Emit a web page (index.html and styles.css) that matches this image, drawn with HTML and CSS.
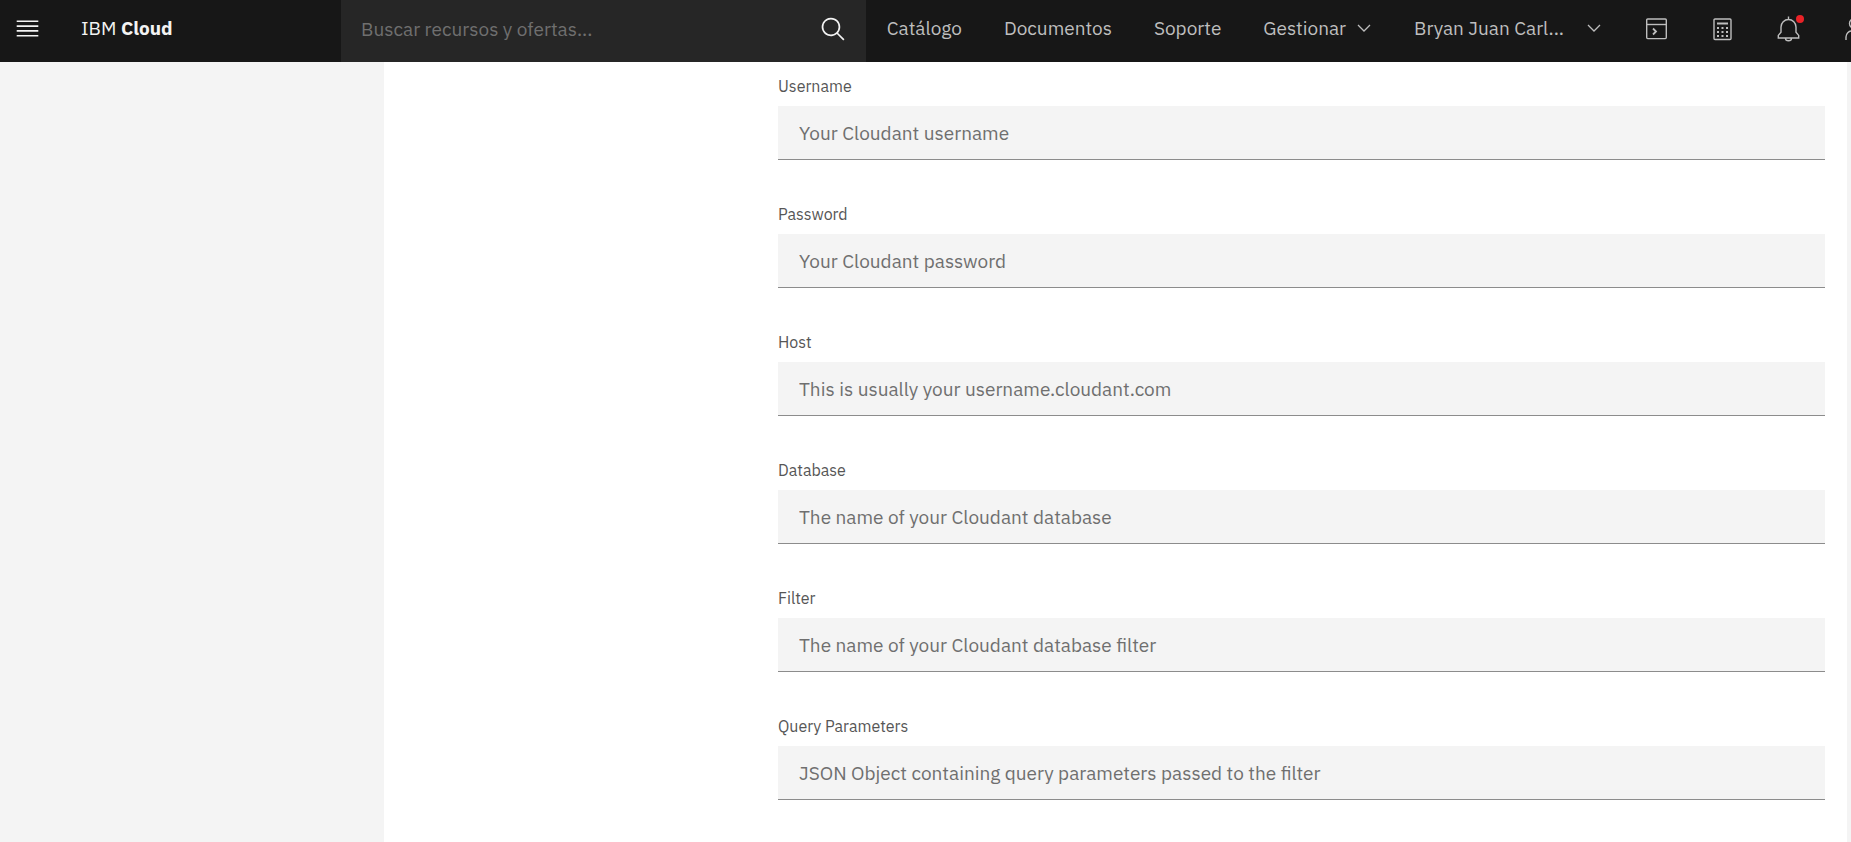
FILE: index.html
```html
<!DOCTYPE html>
<html lang="es">
<head>
<meta charset="utf-8">
<title>IBM Cloud</title>
<link rel="stylesheet" href="styles.css">
</head>
<body>
<header class="header">
  <button class="menu" type="button" aria-label="Menú">
    <svg class="icon" viewBox="0 0 20 20"><path d="M2 14.8h16V16H2zM2 11.2h16v1.2H2zM2 7.6h16v1.2H2zM2 4h16v1.2H2z"/></svg>
  </button>
  <a class="brand" href="#">IBM <b>Cloud</b></a>
  <form class="search" role="search">
    <input class="search-input" type="text" aria-label="Buscar" placeholder="Buscar recursos y ofertas...">
    <button class="search-button" type="button" aria-label="Buscar">
      <svg class="icon" viewBox="0 0 32 32"><path d="M29 27.586l-7.552-7.552a11.018 11.018 0 1 0-1.414 1.414L27.586 29zM4 13a9 9 0 1 1 9 9 9.01 9.01 0 0 1-9-9z"/></svg>
    </button>
  </form>
  <nav class="nav">
    <a class="nav-link" href="#">Catálogo</a>
    <a class="nav-link" href="#">Documentos</a>
    <a class="nav-link" href="#">Soporte</a>
    <button class="nav-link" type="button">Gestionar
      <svg class="chevron" viewBox="0 0 14 9"><path d="M1 1l6 6 6-6"/></svg>
    </button>
  </nav>
  <button class="account" type="button"><span class="account-name">Bryan Juan Carl...</span>
    <svg class="chevron" viewBox="0 0 14 9"><path d="M1 1l6 6 6-6"/></svg>
  </button>
  <div class="tools">
    <button class="tool" type="button" aria-label="Shell">
      <svg class="icon line" viewBox="0 0 27 27"><rect x="3.700" y="4" width="19.600" height="19.600" rx="1"/><path d="M3.700 9.500h19.600"/><path d="M10 13.500l3 3-3 3" stroke-width="1.800"/></svg>
    </button>
    <button class="tool" type="button" aria-label="Calculadora">
      <svg class="icon line" viewBox="0 0 27 27"><rect x="5" y="4" width="17" height="20.500" rx="1"/><path d="M8 8.500h11" stroke-width="2"/><path d="M8 12.900h11M8 16.900h11M8 20.900h11" stroke-width="2" stroke-dasharray="2 2.500"/></svg>
    </button>
    <button class="tool" type="button" aria-label="Notificaciones">
      <svg class="icon line" viewBox="0 0 27 27"><path d="M13.500 1.500v3M3.300 23v-2.600l2.700-3.200v-5.200a7.500 7.500 0 0 1 15 0v5.200l2.700 3.200v2.600zM10.500 23.200a3 2.600 0 0 0 6 0"/></svg>
      <span class="badge"></span>
    </button>
    <button class="tool" type="button" aria-label="Perfil">
      <svg class="icon line" viewBox="0 0 27 27"><circle cx="13.500" cy="8.500" r="5"/><path d="M5 25v-3a6 6 0 0 1 6-6h5a6 6 0 0 1 6 6v3"/></svg>
    </button>
  </div>
</header>
<div class="page">
  <aside class="sidebar"></aside>
  <main class="content">
    <form class="fields">
      <div class="field"><label class="label" for="username">Username</label><input class="input" id="username" type="text" placeholder="Your Cloudant username"></div>
      <div class="field"><label class="label" for="password">Password</label><input class="input" id="password" type="password" placeholder="Your Cloudant password"></div>
      <div class="field"><label class="label" for="host">Host</label><input class="input" id="host" type="text" placeholder="This is usually your username.cloudant.com"></div>
      <div class="field"><label class="label" for="database">Database</label><input class="input" id="database" type="text" placeholder="The name of your Cloudant database"></div>
      <div class="field"><label class="label" for="filter">Filter</label><input class="input" id="filter" type="text" placeholder="The name of your Cloudant database filter"></div>
      <div class="field"><label class="label" for="query">Query Parameters</label><input class="input" id="query" type="text" placeholder="JSON Object containing query parameters passed to the filter"></div>
    </form>
  </main>
</div>
</body>
</html>
```
FILE: styles.css
```css
* { box-sizing: border-box; }
body {
  margin: 0;
  min-height: 100vh;
  display: flex;
  flex-direction: column;
  background: #f4f4f4;
  font-family: "IBM Plex Sans", Roboto, sans-serif;
  font-size: 19px;
  line-height: 24px;
}
button, input { font: inherit; border: 0; border-radius: 0; outline: 0; }
button { background: none; color: inherit; padding: 0; }
a { color: inherit; text-decoration: none; }

.header {
  display: flex;
  height: 62px;
  background: #171717;
  color: #bebebe;
  overflow: hidden;
}
.icon { display: block; width: 27px; height: 27px; fill: currentColor; }
.line { fill: none; stroke: currentColor; stroke-width: 1.4; }
.menu { flex: none; padding: 0 14px; height: 56px; color: #f3f3f3; }
.brand { flex: none; width: 286px; padding: 16px 26px; color: #f3f3f3; }
.search { display: flex; flex: 1; background: #262626; }
.search-input {
  flex: 1;
  min-width: 0;
  padding: 0 20px 4px;
  background: transparent;
  color: #f3f3f3;
}
.search-input::placeholder { color: #6f6f6f; opacity: 1; }
.search-button { width: 66px; height: 58px; padding: 0 20px; color: #f3f3f3; }
.nav { display: flex; flex: none; height: 56px; }
.nav-link { display: flex; align-items: center; gap: 11px; padding: 0 21px; }
.chevron { width: 14px; height: 9px; fill: none; stroke: currentColor; stroke-width: 1.3; }
.account { display: flex; align-items: center; flex: none; height: 56px; gap: 23px; padding: 0 22px; }
.tools { display: flex; flex: none; height: 56px; margin-right: -36px; }
.tool { position: relative; display: grid; place-items: center; width: 66px; }
.badge {
  position: absolute;
  top: 15px;
  right: 17px;
  width: 8px;
  height: 8px;
  border-radius: 50%;
  background: #ea2227;
}

.page { display: flex; flex: 1; }
.sidebar { flex: none; width: 384px; }
.content { flex: 1; margin-right: 4px; padding: 12px 22px 41px 394px; background: #fff; }
.fields { display: grid; gap: 42px; }
.field { display: grid; gap: 8px; }
.label { color: #565656; font-size: 16px; line-height: 24px; }
.input {
  width: 100%;
  height: 54px;
  padding: 0 21px;
  background: #f4f4f4;
  border-bottom: 1px solid #8c8c8c;
  color: #171717;
}
.input::placeholder { color: #6f6f6f; opacity: 1; }
```
